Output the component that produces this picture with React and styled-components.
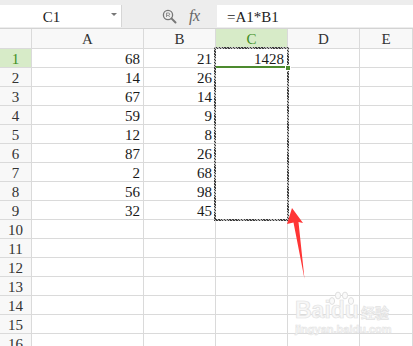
import React from 'react';
import styled, { createGlobalStyle } from 'styled-components';

const GlobalStyle = createGlobalStyle`
  html, body {
    margin: 0;
    padding: 0;
    background: #ffffff;
    overflow: hidden;
  }
  body {
    font-family: 'Liberation Serif', serif;
  }
`

const Page = styled.div`
  position: relative;
  width: 413px;
  height: 346px;
  overflow: hidden;
  background: #fff;
`

// Formula bar
const Toolbar = styled.div`
  display: flex;
  align-items: stretch;
  height: 29px;
  box-sizing: border-box;
  padding: 5px 0 1px 0;
  background: #ededed;
  border-bottom: 1px solid #d3d3d3;
`
const NameBox = styled.div`
  position: relative;
  width: 122px;
  box-sizing: border-box;
  background: #fff;
  border-right: 1px solid #d6d6d6;
  font-family: 'Liberation Serif', serif;
  font-size: 15px;
  line-height: 20px;
  padding-top: 2px;
  padding-right: 18px;
  text-align: center;
  color: #222;
`
const Caret = styled.span`
  position: absolute;
  right: 4px;
  top: 8px;
  width: 0;
  height: 0;
  border-left: 3px solid transparent;
  border-right: 3px solid transparent;
  border-top: 3px solid #777;
`
const Tools = styled.div`
  display: flex;
  align-items: center;
  gap: 12px;
  width: 95px;
  padding-left: 40px;
  box-sizing: border-box;
`
const Fx = styled.span`
  font-family: 'Liberation Serif', serif;
  font-style: italic;
  font-size: 16px;
  color: #666;
  letter-spacing: -0.5px;
`
const FormulaInput = styled.div`
  flex: 1;
  background: #fff;
  font-family: 'Liberation Serif', serif;
  font-size: 15px;
  line-height: 20px;
  padding-top: 2px;
  padding-left: 10px;
  color: #222;
`

// Sheet grid
const Sheet = styled.div`
  position: relative;
`
const Row = styled.div`
  display: grid;
  grid-template-columns: 32px 112px 72px 72px 72px 1fr;
  height: ${p => (p.$head ? 20 : 19)}px;
`
const Cell = styled.div`
  box-sizing: border-box;
  border-right: 1px solid #dadada;
  border-bottom: 1px solid #dadada;
  font-family: 'Liberation Serif', serif;
  font-size: 15px;
  line-height: 17px;
  padding: 2px 3px 0 3px;
  text-align: right;
  color: #1a1a1a;
  white-space: nowrap;
  overflow: hidden;
`
const HeadCell = styled(Cell)`
  text-align: center;
  padding: 2px 0 0 0;
  background: ${p => (p.$sel ? '#d7ebc8' : '#f8f8f8')};
  color: ${p => (p.$sel ? '#3f8f24' : '#333')};
`

// copy marquee around C1:C9
const Ants = styled.div`
  position: absolute;
  left: 214px;
  top: 18px;
  width: 75px;
  height: 174px;
  box-sizing: border-box;
  border: 2px solid #777;
  border-image: repeating-linear-gradient(45deg, #3a3a3a 0 1px, #bdbdbd 1px 2px) 2;
  pointer-events: none;
`
const ActiveLine = styled.div`
  position: absolute;
  left: 216px;
  top: 37px;
  width: 71px;
  height: 2px;
  background: #4c8a2e;
`
const Handle = styled.div`
  position: absolute;
  left: 285px;
  top: 36px;
  width: 4px;
  height: 4px;
  background: #4c8a2e;
  border: 1px solid #fff;
`

const Overlay = styled.svg`
  position: absolute;
  left: 0;
  top: 0;
  pointer-events: none;
`

const Watermark = styled.div`
  position: absolute;
  left: 295px;
  top: 290px;
  width: 100px;
  color: #f7f7f7;
  font-family: 'Liberation Sans', sans-serif;
  font-weight: bold;
  pointer-events: none;
`
const MarkTop = styled.div`
  display: flex;
  align-items: flex-end;
  height: 32px;
  font-size: 23px;
  line-height: 23px;
  -webkit-text-stroke: 0.7px #e2e2e2;
`
const MarkCn = styled.span`
  font-family: 'Noto Sans CJK SC', sans-serif;
  font-size: 14px;
  line-height: 19px;
  margin-left: 2px;
`
const MarkUrl = styled.div`
  font-size: 11px;
  line-height: 12px;
  margin-top: 1px;
  -webkit-text-stroke: 0.5px #e2e2e2;
`

const cols = ['A', 'B', 'C', 'D', 'E'];
const data = [
  [68, 21, 1428],
  [14, 26],
  [67, 14],
  [59, 9],
  [12, 8],
  [87, 26],
  [2, 68],
  [56, 98],
  [32, 45],
];

function Magnifier() {
  return (
    <svg width="15" height="15" viewBox="0 0 15 15">
      <circle cx="6" cy="6" r="4.6" fill="none" stroke="#777" strokeWidth="1.3" />
      <path d="M9.4 9.4 L13.5 13.5" stroke="#777" strokeWidth="2" strokeLinecap="round" />
      <path d="M4.5 8 V4 H6.5 a1.2 1.2 0 0 1 0 2.4 H4.8 M6.2 6.4 L7.8 8" fill="none" stroke="#888" strokeWidth="0.9" />
    </svg>
  );
}

export default function App() {
  return (
    <>
      <GlobalStyle />
      <Page>
        <Toolbar>
          <NameBox>C1<Caret /></NameBox>
          <Tools>
            <Magnifier />
            <Fx>fx</Fx>
          </Tools>
          <FormulaInput>=A1*B1</FormulaInput>
        </Toolbar>
        <Sheet>
          <Row $head>
            <HeadCell />
            {cols.map(c => (
              <HeadCell key={c} $sel={c === 'C'}>{c}</HeadCell>
            ))}
          </Row>
          {Array.from({ length: 16 }, (_, i) => {
            const r = data[i] || [];
            return (
              <Row key={i}>
                <HeadCell $sel={i === 0}>{i + 1}</HeadCell>
                {cols.map((c, j) => (
                  <Cell key={c}>{r[j] !== undefined ? r[j] : ''}</Cell>
                ))}
              </Row>
            );
          })}
          <Ants />
          <ActiveLine />
          <Handle />
        </Sheet>
        <Overlay width="413" height="346" viewBox="0 0 413 346">
          <polygon
            points="292,208 303,223 298.5,222 304.5,279 293.5,222.5 287,224"
            fill="#ff3535"
          />
          <g fill="#fafafa" stroke="#e0e0e0" strokeWidth="1">
            <ellipse cx="332" cy="301" rx="2.6" ry="3.4" />
            <ellipse cx="338" cy="295.5" rx="2.6" ry="3.4" />
            <ellipse cx="345" cy="295.5" rx="2.6" ry="3.4" />
            <ellipse cx="351" cy="301" rx="2.6" ry="3.4" />
          </g>
        </Overlay>
        <Watermark>
          <MarkTop>
            Bai<span>du</span><MarkCn>经验</MarkCn>
          </MarkTop>
          <MarkUrl>jingyan.baidu.com</MarkUrl>
        </Watermark>
      </Page>
    </>
  );
}
